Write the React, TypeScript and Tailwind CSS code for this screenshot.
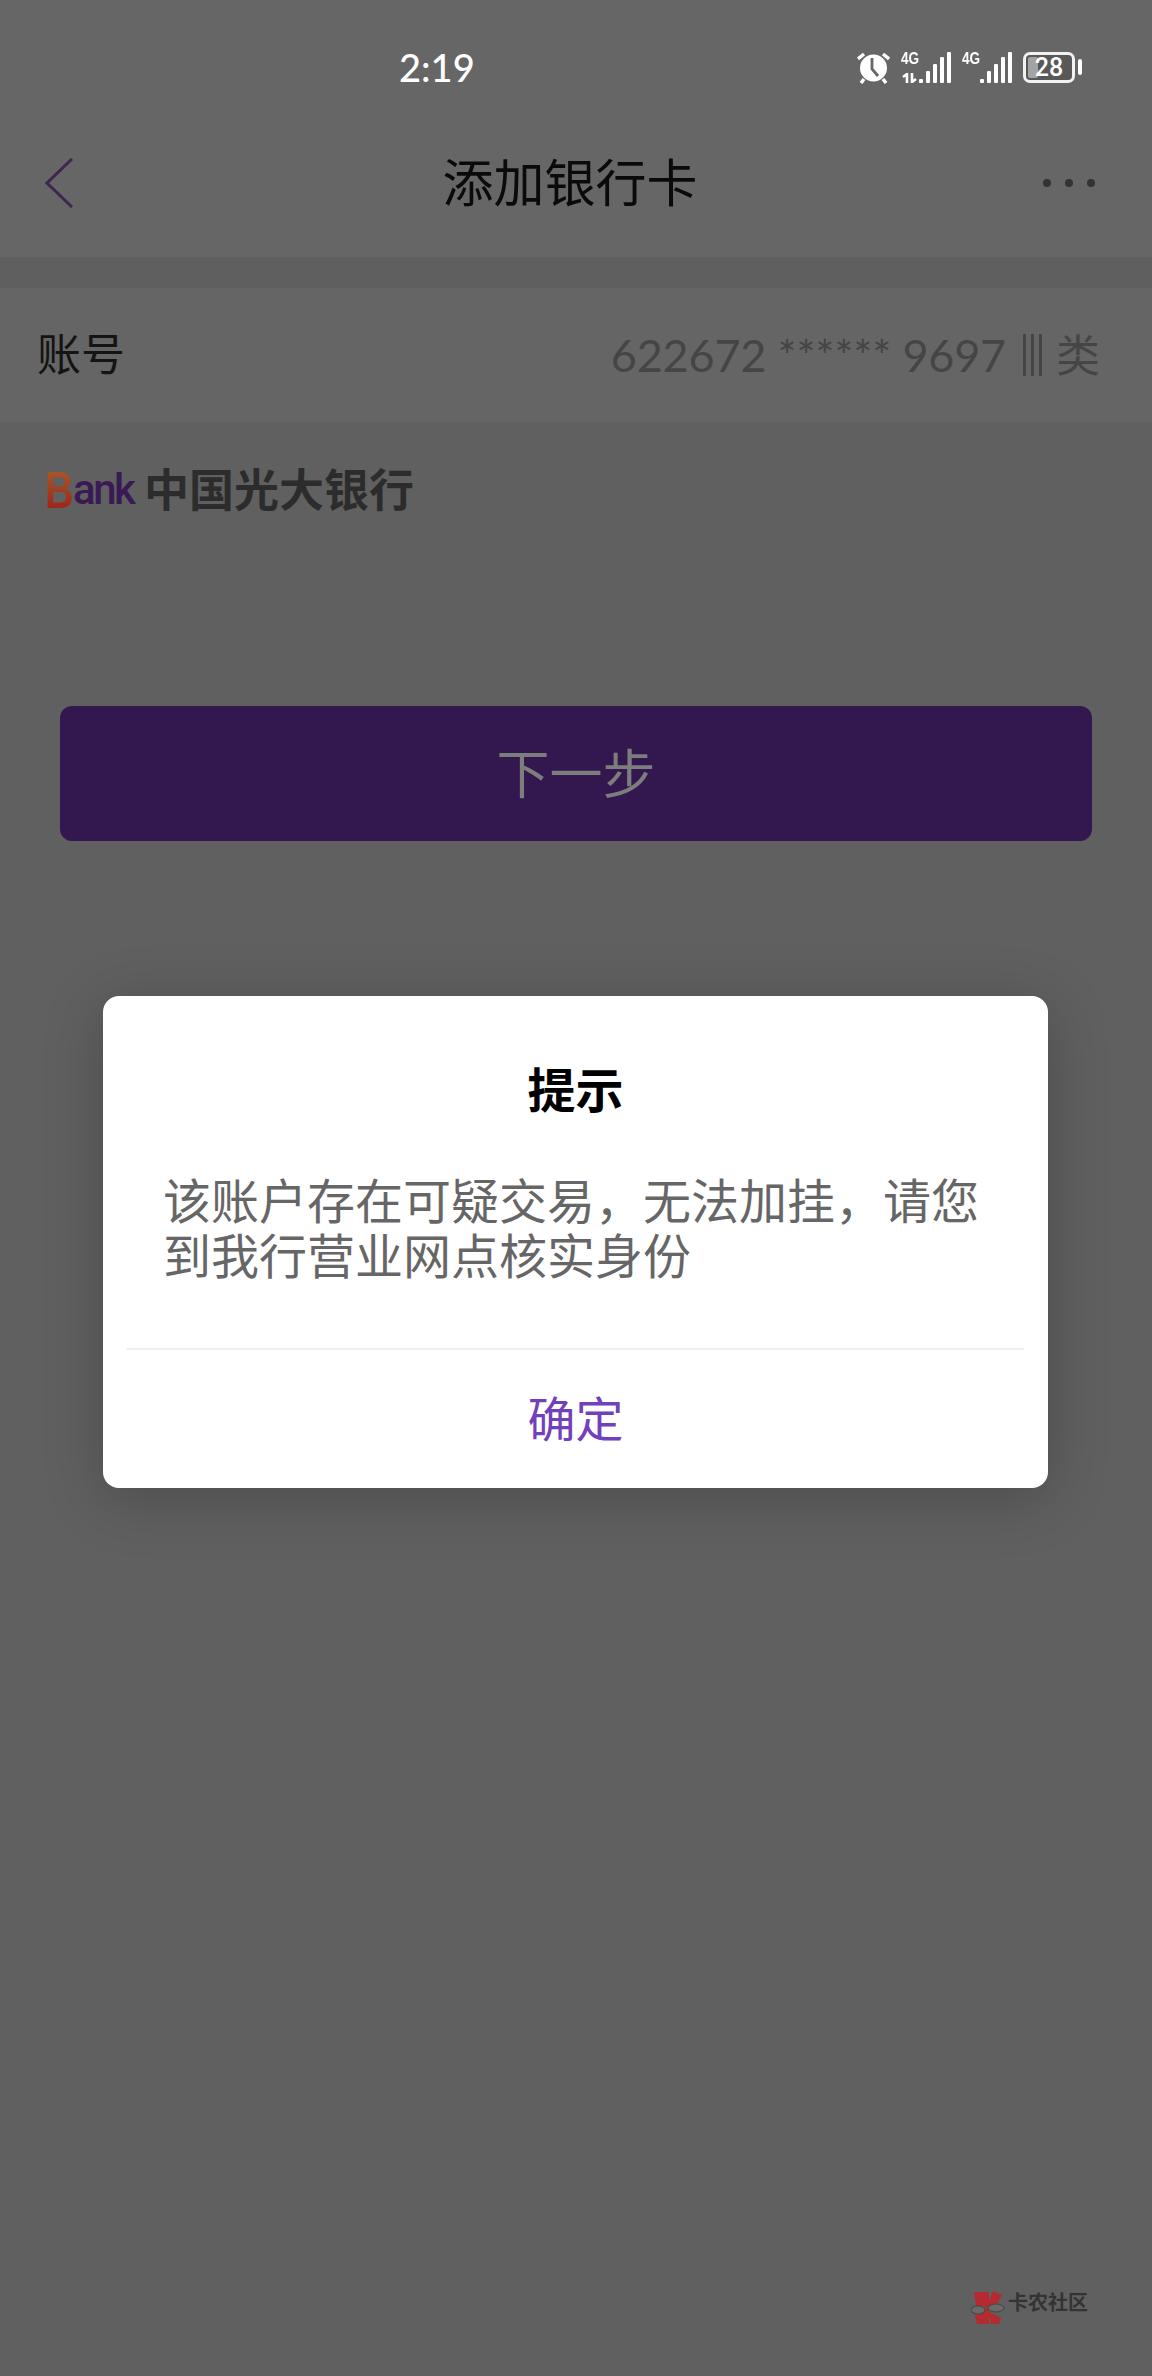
const CJK = { fontFamily: '"Noto Sans CJK SC", "Noto Sans", sans-serif' }

function Alarm() {
  return (
    <svg width="33" height="34" viewBox="0 0 33 34" aria-hidden="true">
      <circle cx="16.5" cy="18" r="13.5" fill="#fff" />
      <path d="M15 8v11l6 7" fill="none" stroke="#666" strokeWidth="2.8" />
      <path d="M1 9l6-5M32 9l-6-5" stroke="#fff" strokeWidth="3.4" fill="none" />
      <path d="M7 29l-3 4M26 29l3 4" stroke="#fff" strokeWidth="3.4" fill="none" />
    </svg>
  )
}

function Signal({ arrows }: { arrows?: boolean }) {
  const bars = [4, 12, 19, 26, 31]
  return (
    <div className="flex items-end">
      <div className="relative w-[18px] h-[31px] text-white">
        <span className="absolute left-0 top-0 text-[17px] leading-[13px] font-bold [font-family:'Liberation_Sans',sans-serif] [transform:scaleX(0.8)] origin-left">4G</span>
        {arrows && (
          <svg className="absolute left-0 bottom-0" width="18" height="10" viewBox="0 0 18 10" aria-hidden="true">
            <path d="M6 10V1L2 4M11 0v9l4-3" fill="none" stroke="#fff" strokeWidth="2.6" />
          </svg>
        )}
      </div>
      <div className="flex items-end gap-[3px]">
        {bars.map(h => (
          <div key={h} className="w-[4px] bg-white rounded-[1px]" style={{ height: h }} />
        ))}
      </div>
    </div>
  )
}

function Battery() {
  return (
    <div className="flex items-center gap-[3px]">
      <div className="relative w-[52px] h-[31px] border-[3px] border-[#f2f2f2] bg-[#585858] rounded-[7px] flex items-center justify-center">
        <div className="absolute left-[2px] top-[2px] bottom-[2px] w-[10px] bg-[#a3a3a3] rounded-[2px]" />
        <span className="relative text-white text-[25px] leading-none font-medium [font-family:Roboto,sans-serif]">28</span>
      </div>
      <div className="w-[4px] h-[16px] bg-white rounded-[2px]" />
    </div>
  )
}

function Watermark() {
  return (
    <div className="flex items-center justify-end pr-[64px] gap-[3px]">
      <svg width="34" height="36" viewBox="0 0 34 36" aria-hidden="true">
        <path d="M3 2h12v14H5zM22 1l9 4-7 13-8-2zM4 25l10-3v12H6zM17 21l13 7-2 6h-8z" fill="#b52a30" />
        <path d="M14 2h4v32h-4z" fill="#b52a30" />
        <ellipse cx="7" cy="20" rx="7" ry="4" fill="#6a6a6a" stroke="#4a4a4a" strokeWidth="1.2" />
        <ellipse cx="25" cy="18" rx="8" ry="4" fill="#6a6a6a" stroke="#4a4a4a" strokeWidth="1.2" />
      </svg>
      <span className="text-[20px] leading-none font-bold text-[#333] -mt-[12px]" style={CJK}>卡农社区</span>
    </div>
  )
}

export default function App() {
  return (
    <div className="relative w-[1152px] h-[2376px] bg-[#636363] overflow-hidden flex flex-col" style={CJK}>
      {/* Status bar */}
      <div className="h-[134px] bg-[#666666] flex items-center pl-[399px] pr-[70px]">
        <span className="text-white text-[38px] leading-none font-medium [font-family:Lato,sans-serif]">2:19</span>
        <div className="ml-auto flex items-center gap-[11px]">
          <Alarm />
          <Signal arrows />
          <Signal />
          <Battery />
        </div>
      </div>

      {/* Header */}
      <div className="h-[123px] bg-[#666666] flex items-center px-[57px]">
        <div className="flex-1 -mt-[25px] -ml-[12px]">
          <svg width="28" height="50" viewBox="0 0 28 50" aria-hidden="true">
            <path d="M27 1L2 25l25 24" fill="none" stroke="#3f2650" strokeWidth="3" />
          </svg>
        </div>
        <h1 className="text-[51px] leading-none font-normal text-[#0a0a0a] -mt-[31px]">添加银行卡</h1>
        <div className="flex-1 flex justify-end gap-[14px] -mt-[25px]">
          <span className="w-[8px] h-[8px] rounded-full bg-[#333]" />
          <span className="w-[8px] h-[8px] rounded-full bg-[#333]" />
          <span className="w-[8px] h-[8px] rounded-full bg-[#333]" />
        </div>
      </div>

      <div className="h-[31px] bg-[#5f5f5f]" />

      {/* Account row */}
      <div className="h-[134px] bg-[#656565] flex items-center justify-between pl-[37px] pr-[52px]">
        <span className="text-[44px] leading-none text-[#141414] -mt-[6px]">账号</span>
        <div className="flex items-center text-[#454545]">
          <span className="text-[45px] leading-none tracking-[-0.2px] [font-family:Lato,sans-serif]">622672 ****** 9697</span>
          <span className="ml-[17px] flex gap-[5px] h-[42px]">
            <i className="w-[3px] bg-[#454545]" />
            <i className="w-[3px] bg-[#454545]" />
            <i className="w-[3px] bg-[#454545]" />
          </span>
          <span className="ml-[14px] text-[44px] leading-none -mt-[4px]">类</span>
        </div>
      </div>

      {/* Bank + button */}
      <div className="bg-[#606060] flex-1 flex flex-col">
        <div className="h-[136px] flex items-center pl-[45px]">
          <span className="w-[38px] -mr-[10px] text-[52px] leading-none font-bold bg-[linear-gradient(180deg,#a9602f,#9a1c14)] bg-clip-text text-transparent [font-family:'Liberation_Sans',sans-serif] [transform:scaleX(0.76)] origin-left">B</span>
          <span className="w-[61px] text-[42px] leading-none font-medium text-[#3a1a55] tracking-[-2.5px] [font-family:Roboto,sans-serif]">ank</span>
          <span className="ml-[10px] text-[45px] leading-none font-bold text-[#2c2c2c] -mt-[6px]">中国光大银行</span>
        </div>
        <div className="mx-[60px] mt-[148px] h-[135px] rounded-[12px] bg-[#33174f] flex items-center justify-center">
          <span className="text-[53px] leading-none text-[#7d7d7d] -mt-[4px]">下一步</span>
        </div>
        <div className="flex-1" />
        <div className="pb-[50px]">
          <Watermark />
        </div>
      </div>

      {/* Dialog */}
      <div className="absolute left-[103px] top-[996px] w-[945px] h-[492px] bg-white rounded-[16px] shadow-[0_10px_60px_rgba(0,0,0,0.22)] flex flex-col">
        <div className="h-[352px] px-[60px] flex flex-col">
          <h2 className="mt-[65px] text-center text-[48px] leading-[52px] font-bold text-black">提示</h2>
          <p className="mt-[58px] text-[48px] leading-[55px] text-[#666666]">该账户存在可疑交易，无法加挂，请您到我行营业网点核实身份</p>
        </div>
        <div className="mx-[24px] h-[2px] bg-[#efefef]" />
        <div className="flex-1 flex items-center justify-center">
          <span className="text-[48px] leading-none text-[#7340bd] -mt-[6px]">确定</span>
        </div>
      </div>
    </div>
  )
}
